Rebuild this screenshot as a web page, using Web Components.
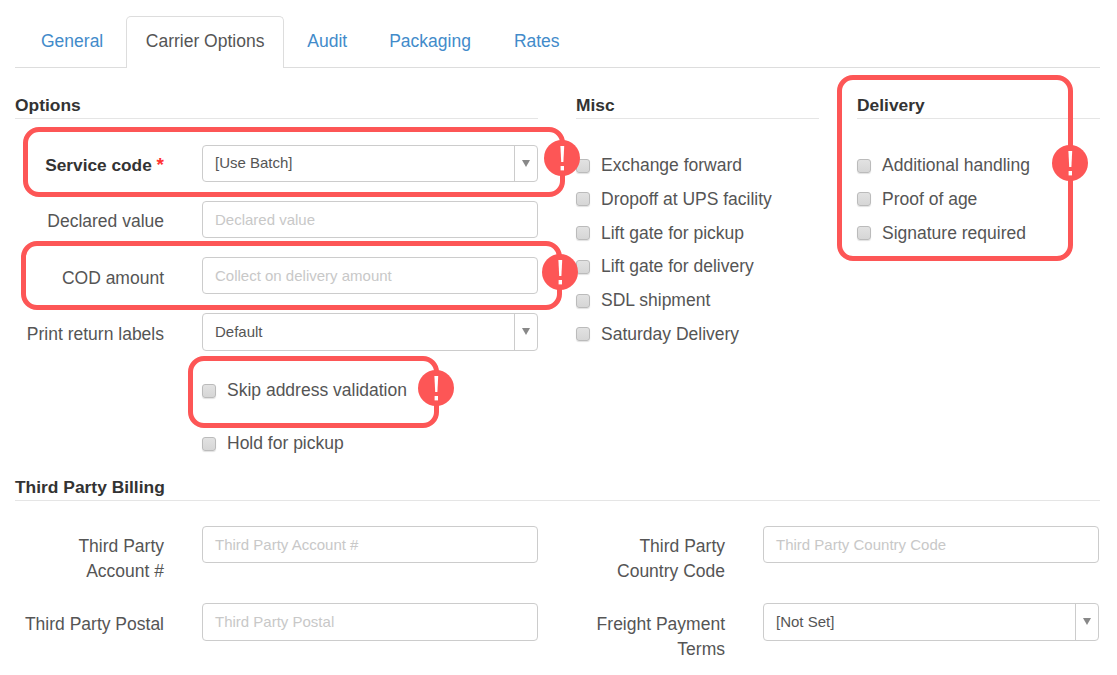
<!doctype html>
<html>
<head>
<meta charset="utf-8">
<title>Carrier Options</title>
<style>
  html,body{margin:0;background:#fff}
  body{font:17.5px/25px "Liberation Sans",Arial,sans-serif;color:#555;width:1117px;height:675px;overflow:hidden;position:relative}
</style>
</head>
<body>
<carrier-page></carrier-page>

<script>
// small helper so each component just declares css + html
function comp(name, css, html){
  class C extends HTMLElement {
    constructor(){
      super();
      this.attachShadow({mode:'open'});
      this.shadowRoot.innerHTML = `<style>${css}</style>${html}`;
    }
  }
  customElements.define(name, C);
}

comp('nav-tabs', `
  :host{display:flex;height:52px;box-sizing:border-box;border-bottom:1px solid #ddd;padding-left:11px;align-items:flex-start;white-space:nowrap}
  a{display:block;box-sizing:border-box;height:51px;padding:13px 15px 0;color:#428bca;text-decoration:none;line-height:25px}
  a.on{color:#555;background:#fff;border:1px solid #ddd;border-bottom:0;border-radius:5px 5px 0 0;height:52px;padding:12px 18.5px 0;margin:0 8px 0 8px;width:158px}
`, `<a>General</a><a class="on">Carrier Options</a><a>Audit</a><a style="margin-left:12px">Packaging</a><a style="margin-left:13px">Rates</a>`);

comp('section-head', `
  :host{display:block;height:33px;box-sizing:border-box;border-bottom:1px solid #e5e5e5;font-weight:bold;font-size:17.4px;color:#333;line-height:25px;padding-top:7px;margin-top:18px}
`, `<slot></slot>`);

comp('check-row', `
  :host{display:flex;align-items:center;height:25px;color:#555}
  i{display:block;width:14px;height:14px;box-sizing:border-box;border:1px solid #bbb;border-radius:3px;background:linear-gradient(#e2e2e2,#d6d6d6);box-shadow:0 1px 1px rgba(0,0,0,.12);margin-right:11px;flex:none}
`, `<i></i><span><slot></slot></span>`);

comp('text-box', `
  :host{display:block;box-sizing:border-box;height:37px;border:1px solid #ccc;border-radius:4px;background:#fff;padding:0 12px;font-size:15px;line-height:35px;color:#c8c8c8;overflow:hidden;white-space:nowrap}
`, `<slot></slot>`);

comp('select-box', `
  :host{display:flex;box-sizing:border-box;height:37px;border:1px solid #ccc;border-radius:4px;background:#fff;font-size:15px;line-height:34px;color:#555}
  span{flex:1;padding-left:12px;white-space:nowrap}
  b{flex:none;width:22px;border-left:1px solid #ccc;position:relative}
  b::after{content:"";position:absolute;left:7px;top:14px;border:4px solid transparent;border-top:7px solid #888;border-bottom:0}
`, `<span><slot></slot></span><b></b>`);

comp('form-row', `
  :host{display:grid;grid-template-columns:149px 336px;column-gap:38px;align-items:start}
  .l{text-align:right;padding-top:var(--lt,8px)}
`, `<div class="l"><slot name="label"></slot></div><div><slot></slot></div>`);

// red frame with exclamation badge, drawn over the form
comp('call-out', `
  :host{position:absolute;display:block;box-sizing:border-box;border:5.5px solid #fd5656;border-radius:16px;pointer-events:none}
  svg{position:absolute;width:36px;height:36px;left:var(--bx);top:var(--by)}
`, `<svg viewBox="0 0 36 36"><circle cx="18" cy="18" r="18" fill="#fd5656"/><path d="M16.4 6h3.8l-.8 16h-2.2z" fill="#fff"/><rect x="16.6" y="26" width="3.4" height="4.4" fill="#fff"/></svg>`);

comp('carrier-page', `
  :host{display:block;padding:16px 17px 0 15px;position:relative;height:675px;box-sizing:border-box}
  .top{display:grid;grid-template-columns:523px 243px 243px;column-gap:38px;height:395px}
  .req{font-weight:bold;color:#333;font-size:17.3px}
  .req em{color:#f33;font-style:normal;font-size:19px;line-height:0}
  .checks{display:flex;flex-direction:column;gap:8.8px;margin-top:34px}
  .opts{display:flex;flex-direction:column;margin-top:26px}
  .opts form-row{margin-bottom:19px}
  .inset{margin-left:187px}
  .tp{display:grid;grid-template-columns:523px 523px;column-gap:38px;row-gap:19px;margin-top:25px}
  .hd2{margin-top:5px}
  .low{--lt:9px}
`, `
  <nav-tabs></nav-tabs>
  <div class="top">
    <div>
      <section-head>Options</section-head>
      <div class="opts">
        <form-row><span slot="label" class="req">Service code <em>*</em></span><select-box>[Use Batch]</select-box></form-row>
        <form-row><span slot="label">Declared value</span><text-box>Declared value</text-box></form-row>
        <form-row class="low"><span slot="label">COD amount</span><text-box>Collect on delivery amount</text-box></form-row>
        <form-row class="low" style="margin:0"><span slot="label">Print return labels</span><select-box style="height:38px;line-height:36px">Default</select-box></form-row>
        <check-row class="inset" style="margin-top:27px">Skip address validation</check-row>
        <check-row class="inset" style="margin-top:28px">Hold for pickup</check-row>
      </div>
    </div>
    <div>
      <section-head>Misc</section-head>
      <div class="checks">
        <check-row>Exchange forward</check-row>
        <check-row>Dropoff at UPS facility</check-row>
        <check-row>Lift gate for pickup</check-row>
        <check-row>Lift gate for delivery</check-row>
        <check-row>SDL shipment</check-row>
        <check-row>Saturday Delivery</check-row>
      </div>
    </div>
    <div>
      <section-head>Delivery</section-head>
      <div class="checks">
        <check-row>Additional handling</check-row>
        <check-row>Proof of age</check-row>
        <check-row>Signature required</check-row>
      </div>
    </div>
  </div>
  <section-head class="hd2">Third Party Billing</section-head>
  <div class="tp">
    <form-row><span slot="label">Third Party<br>Account #</span><text-box>Third Party Account #</text-box></form-row>
    <form-row><span slot="label">Third Party<br>Country Code</span><text-box>Third Party Country Code</text-box></form-row>
    <form-row class="low"><span slot="label">Third Party Postal</span><text-box style="height:38px">Third Party Postal</text-box></form-row>
    <form-row class="low"><span slot="label">Freight Payment<br>Terms</span><select-box style="height:38px;line-height:36px">[Not Set]</select-box></form-row>
  </div>
  <call-out style="left:23px;top:127px;width:542px;height:70px;--bx:516px;--by:8px"></call-out>
  <call-out style="left:21px;top:241px;width:541px;height:69px;--bx:516px;--by:8px"></call-out>
  <call-out style="left:188px;top:356px;width:251px;height:72px;--bx:225px;--by:9px"></call-out>
  <call-out style="left:837px;top:75px;width:236px;height:186px;--bx:210px;--by:65px"></call-out>
`);
</script>
</body>
</html>
